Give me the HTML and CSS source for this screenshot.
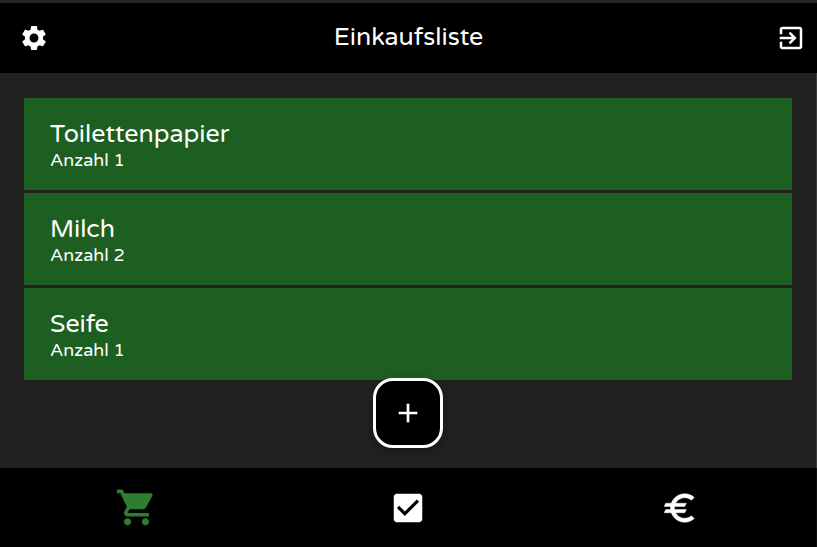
FILE: index.html
```html
<!DOCTYPE html>
<html lang="de">
<head>
<meta charset="utf-8">
<meta name="viewport" content="width=device-width, initial-scale=1">
<title>Einkaufsliste</title>
<link rel="stylesheet" href="styles.css">
</head>
<body>
<header class="topbar">
  <button class="icon-button" type="button" aria-label="Einstellungen">
    <svg class="icon" viewBox="0 0 24 24" aria-hidden="true"><path d="M19.14 12.94c.04-.3.06-.61.06-.94 0-.32-.02-.64-.07-.94l2.03-1.58c.18-.14.23-.41.12-.61l-1.92-3.32c-.12-.22-.37-.29-.59-.22l-2.39.96c-.5-.38-1.03-.7-1.62-.94l-.36-2.54c-.04-.24-.24-.41-.48-.41h-3.84c-.24 0-.43.17-.47.41l-.36 2.54c-.59.24-1.13.57-1.62.94l-2.39-.96c-.22-.08-.47 0-.59.22L2.74 8.87c-.12.21-.08.47.12.61l2.03 1.58c-.05.3-.09.63-.09.94s.02.64.07.94l-2.03 1.58c-.18.14-.23.41-.12.61l1.92 3.32c.12.22.37.29.59.22l2.39-.96c.5.38 1.03.7 1.62.94l.36 2.54c.05.24.24.41.48.41h3.84c.24 0 .44-.17.47-.41l.36-2.54c.59-.24 1.13-.56 1.62-.94l2.39.96c.22.08.47 0 .59-.22l1.92-3.32c.12-.22.07-.47-.12-.61l-2.01-1.58zM12 15.6c-1.98 0-3.6-1.62-3.6-3.6s1.62-3.6 3.6-3.6 3.6 1.62 3.6 3.6-1.62 3.6-3.6 3.6z"/></svg>
  </button>
  <h1 class="title">Einkaufsliste</h1>
  <button class="icon-button icon-button-end" type="button" aria-label="Abmelden">
    <svg class="icon" viewBox="0 0 24 24" aria-hidden="true"><path d="M10.09 15.59L11.5 17l5-5-5-5-1.41 1.41L12.67 11H3v2h9.67l-2.58 2.59zM19 3H5c-1.11 0-2 .9-2 2v4h2V5h14v14H5v-4H3v4c0 1.1.89 2 2 2h14c1.1 0 2-.9 2-2V5c0-1.1-.9-2-2-2z"/></svg>
  </button>
</header>
<main class="content">
  <ul class="list">
    <li class="item">
      <h2 class="item-name">Toilettenpapier</h2>
      <p class="item-count">Anzahl 1</p>
    </li>
    <li class="item">
      <h2 class="item-name">Milch</h2>
      <p class="item-count">Anzahl 2</p>
    </li>
    <li class="item">
      <h2 class="item-name">Seife</h2>
      <p class="item-count">Anzahl 1</p>
    </li>
  </ul>
</main>
<footer class="footer">
  <button class="add" type="button" aria-label="Hinzufügen">
    <svg class="icon add-icon" viewBox="0 0 24 24" aria-hidden="true"><path d="M19 13h-6v6h-2v-6H5v-2h6V5h2v6h6v2z"/></svg>
  </button>
  <nav class="tabs">
    <a class="tab tab-active" href="#liste" aria-label="Einkaufsliste">
      <svg class="tab-icon tab-icon-large" viewBox="0 0 24 24" aria-hidden="true"><path d="M7 18c-1.1 0-1.99.9-1.99 2S5.9 22 7 22s2-.9 2-2-.9-2-2-2zM1 2v2h2l3.6 7.59-1.35 2.45c-.16.28-.25.61-.25.96 0 1.1.9 2 2 2h12v-2H7.42c-.14 0-.25-.11-.25-.25l.03-.12.9-1.63h7.45c.75 0 1.41-.41 1.75-1.03l3.58-6.49c.08-.14.12-.31.12-.48 0-.55-.45-1-1-1H5.21l-.94-2H1zm16 16c-1.1 0-1.99.9-1.99 2s.89 2 1.99 2 2-.9 2-2-.9-2-2-2z"/></svg>
    </a>
    <a class="tab" href="#aufgaben" aria-label="Aufgaben">
      <svg class="tab-icon" viewBox="0 0 24 24" aria-hidden="true"><path d="M19 3H5c-1.11 0-2 .9-2 2v14c0 1.1.89 2 2 2h14c1.11 0 2-.9 2-2V5c0-1.1-.89-2-2-2zm-9 14l-5-5 1.41-1.41L10 14.17l7.59-7.59L19 8l-9 9z"/></svg>
    </a>
    <a class="tab" href="#finanzen" aria-label="Finanzen">
      <svg class="tab-icon tab-icon-bold" viewBox="0 0 24 24" aria-hidden="true"><path d="M15 18.5c-2.51 0-4.68-1.42-5.76-3.5H15l1-2H8.58c-.05-.33-.08-.66-.08-1s.03-.67.08-1H15l1-2H9.24C10.32 6.92 12.5 5.5 15 5.5c1.61 0 3.09.59 4.23 1.57L21 5.3C19.41 3.87 17.3 3 15 3c-3.92 0-7.24 2.51-8.48 6H3l-1 2h4.06c-.04.33-.06.66-.06 1s.02.67.06 1H3l-1 2h4.52c1.24 3.49 4.56 6 8.48 6 2.31 0 4.41-.87 6-2.3l-1.78-1.77c-1.13.98-2.6 1.57-4.22 1.57z"/></svg>
    </a>
  </nav>
</footer>
</body>
</html>
```
FILE: styles.css
```css
* {
  box-sizing: border-box;
}

body {
  display: flex;
  flex-direction: column;
  min-height: 100vh;
  margin: 0;
  border-top: 3px solid #262628;
  background: #212121;
  color: #fff;
  font-family: "Varela Round", "Noto Sans", sans-serif;
}

h1,
h2,
p,
ul {
  margin: 0;
  padding: 0;
  font-weight: 400;
}

.topbar {
  display: grid;
  grid-template-columns: 1fr auto 1fr;
  align-items: center;
  height: 70px;
  padding: 0 11px;
  background: #000;
}

.icon-button {
  display: flex;
  justify-self: start;
  padding: 0 8px;
  border: 0;
  background: none;
  color: inherit;
}

.icon-button-end {
  justify-self: end;
  padding: 0;
}

.icon {
  width: 30px;
  height: 30px;
  fill: currentColor;
}

.title {
  padding-bottom: 2px;
  font-size: 25px;
  line-height: 32px;
}

.content {
  flex: 1;
  padding: 25px 24px;
  border-right: 1px solid #3c3c3a;
}

.list {
  display: grid;
  gap: 3px;
  list-style: none;
}

.item {
  padding: 20px 26px;
  background: #1d5f20;
}

.item-name {
  font-size: 25px;
  line-height: 32px;
}

.item-count {
  font-size: 18px;
  line-height: 20px;
}

.footer {
  position: relative;
  margin-right: 1px;
  background: #000;
  box-shadow: 1px 0 #0c0c0a;
}

.add {
  position: absolute;
  bottom: calc(100% + 20px);
  left: calc(50% - 35px);
  display: flex;
  align-items: center;
  justify-content: center;
  width: 70px;
  height: 70px;
  padding: 0;
  border: 3px solid #fff;
  border-radius: 20px;
  background: #000;
  box-shadow: 0 3px 10px rgba(0, 0, 0, 0.3);
  color: #fff;
}

.add-icon {
  width: 32px;
  height: 32px;
}

.tabs {
  display: grid;
  grid-template-columns: repeat(3, 1fr);
  height: 79px;
}

.tab {
  display: flex;
  align-items: center;
  justify-content: center;
  color: #fff;
}

.tab-active {
  color: #2e7d32;
}

.tab-icon {
  width: 38px;
  height: 38px;
  fill: currentColor;
}

.tab-icon-large {
  width: 43px;
  height: 43px;
}

.tab-icon-bold {
  stroke: currentColor;
  stroke-width: 0.3;
}
```
